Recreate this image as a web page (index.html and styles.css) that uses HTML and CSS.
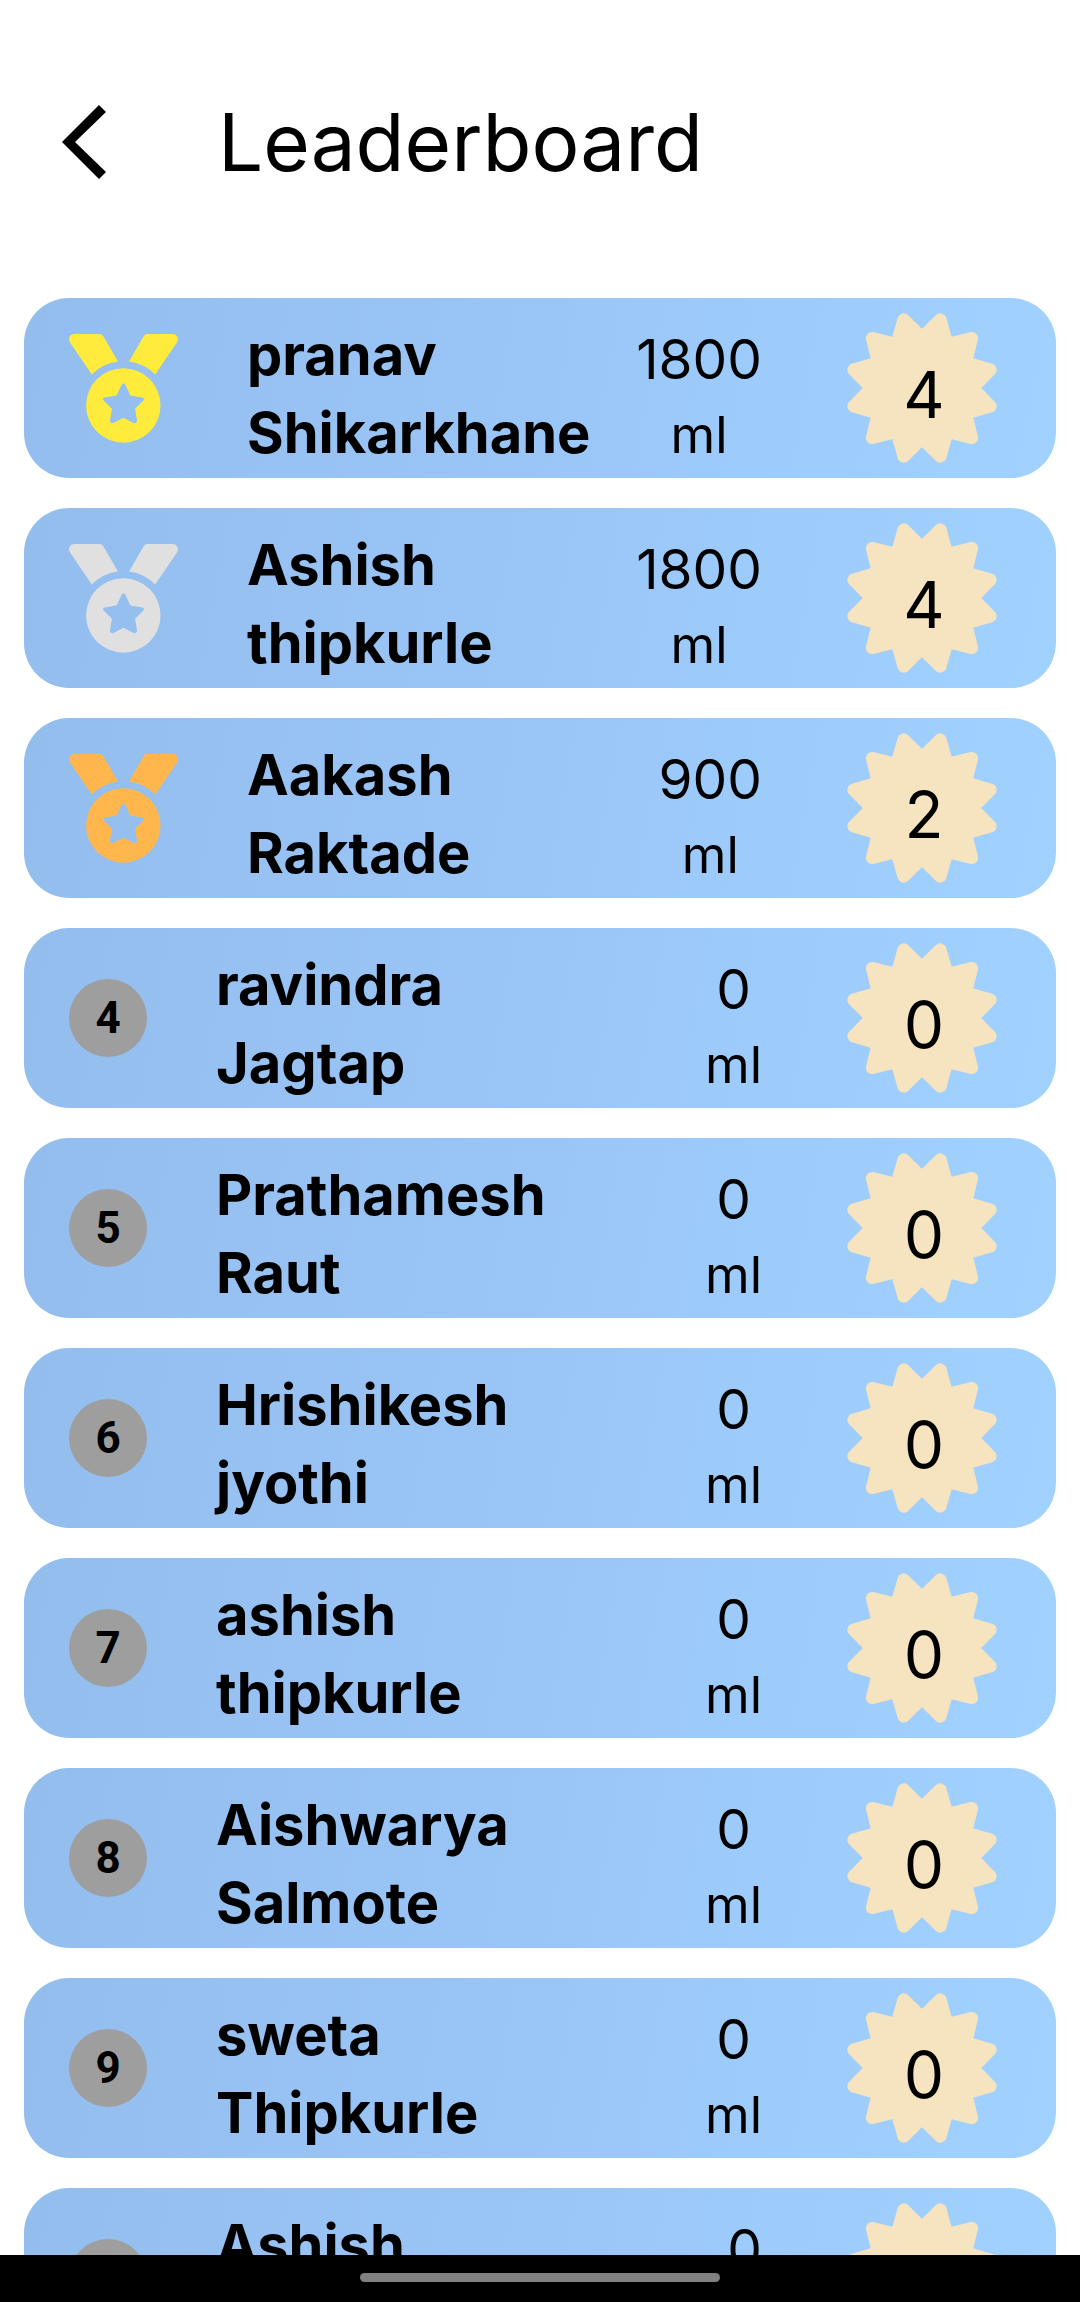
FILE: index.html
```html
<!DOCTYPE html>
<html lang="en">
<head>
<meta charset="utf-8">
<meta name="viewport" content="width=device-width, initial-scale=1">
<title>Leaderboard</title>
<link rel="stylesheet" href="styles.css">
</head>
<body>
<svg class="defs" aria-hidden="true">
  <symbol id="medal" viewBox="57 46 325 325">
    <path d="M72 46H148Q155 46 159 52L203 128A132 132 0 0 0 125 167L60 71Q55 62 59 54Q63 46 72 46Z"/>
    <path d="M367 46H291Q284 46 280 52L236 128A132 132 0 0 1 314 167L379 71Q384 62 380 54Q376 46 367 46Z"/>
    <path fill-rule="evenodd" d="M219 148A111 111 0 1 1 219 370A111 111 0 1 1 219 148ZM214 197L199 229L163 235Q156 238 160 244L185 269L179 305Q180 314 188 312L219 296L251 312Q259 314 260 305L254 269L279 244Q283 238 276 235L240 229L225 197Q219 190 214 197Z"/>
  </symbol>
  <symbol id="burst" viewBox="-225 -225 450 450">
    <path d="M0-178L42-219A19 19 0 0 1 73-210L89-154L146-168A19 19 0 0 1 168-146L154-89L210-73A19 19 0 0 1 219-42L178 0L219 42A19 19 0 0 1 210 73L154 89L168 146A19 19 0 0 1 146 168L89 154L73 210A19 19 0 0 1 42 219L0 178L-42 219A19 19 0 0 1-73 210L-89 154L-146 168A19 19 0 0 1-168 146L-154 89L-210 73A19 19 0 0 1-219 42L-178 0L-219-42A19 19 0 0 1-210-73L-154-89L-168-146A19 19 0 0 1-146-168L-89-154L-73-210A19 19 0 0 1-42-219Z"/>
  </symbol>
</svg>
<header class="app-bar">
  <button class="back" type="button" aria-label="Back">
    <svg viewBox="0 0 44 74"><path d="M37 0L44 7L13 37L44 67L37 74L0 37Z"/></svg>
  </button>
  <h1 class="title">Leaderboard</h1>
</header>
<main class="content">
  <ol class="list">
    <li class="card"><svg class="medal gold" role="img" aria-label="1"><use href="#medal"/></svg><p class="name">pranav<br>Shikarkhane</p><p class="amount">1800<span class="unit">ml</span></p><div class="badge"><svg class="burst"><use href="#burst"/></svg><span class="score">4</span></div></li>
    <li class="card"><svg class="medal silver" role="img" aria-label="2"><use href="#medal"/></svg><p class="name">Ashish<br>thipkurle</p><p class="amount">1800<span class="unit">ml</span></p><div class="badge"><svg class="burst"><use href="#burst"/></svg><span class="score">4</span></div></li>
    <li class="card"><svg class="medal bronze" role="img" aria-label="3"><use href="#medal"/></svg><p class="name">Aakash<br>Raktade</p><p class="amount">900<span class="unit">ml</span></p><div class="badge"><svg class="burst"><use href="#burst"/></svg><span class="score">2</span></div></li>
    <li class="card"><span class="rank">4</span><p class="name">ravindra<br>Jagtap</p><p class="amount">0<span class="unit">ml</span></p><div class="badge"><svg class="burst"><use href="#burst"/></svg><span class="score">0</span></div></li>
    <li class="card"><span class="rank">5</span><p class="name">Prathamesh<br>Raut</p><p class="amount">0<span class="unit">ml</span></p><div class="badge"><svg class="burst"><use href="#burst"/></svg><span class="score">0</span></div></li>
    <li class="card"><span class="rank">6</span><p class="name">Hrishikesh<br>jyothi</p><p class="amount">0<span class="unit">ml</span></p><div class="badge"><svg class="burst"><use href="#burst"/></svg><span class="score">0</span></div></li>
    <li class="card"><span class="rank">7</span><p class="name">ashish<br>thipkurle</p><p class="amount">0<span class="unit">ml</span></p><div class="badge"><svg class="burst"><use href="#burst"/></svg><span class="score">0</span></div></li>
    <li class="card"><span class="rank">8</span><p class="name">Aishwarya<br>Salmote</p><p class="amount">0<span class="unit">ml</span></p><div class="badge"><svg class="burst"><use href="#burst"/></svg><span class="score">0</span></div></li>
    <li class="card"><span class="rank">9</span><p class="name">sweta<br>Thipkurle</p><p class="amount">0<span class="unit">ml</span></p><div class="badge"><svg class="burst"><use href="#burst"/></svg><span class="score">0</span></div></li>
    <li class="card"><span class="rank"></span><p class="name">Ashish</p><p class="amount">0</p><div class="badge"><svg class="burst"><use href="#burst"/></svg></div></li>
  </ol>
</main>
<footer class="nav-bar"><span class="handle"></span></footer>
</body>
</html>
```
FILE: styles.css
```css
* { box-sizing: border-box; }

body {
  margin: 0;
  height: 100vh;
  display: flex;
  flex-direction: column;
  background: #fff;
  color: #000;
  font-family: Inter, Roboto, sans-serif;
}

.defs { position: absolute; width: 0; height: 0; }

.app-bar {
  flex: none;
  display: flex;
  align-items: center;
  height: 283px;
  padding: 0 62px;
  gap: 112px;
}

.back {
  padding: 0;
  border: 0;
  background: none;
  line-height: 0;
}
.back svg { width: 44px; height: 74px; }

.title {
  margin: 0;
  font-size: 80px;
  font-weight: 400;
}

.content {
  flex: 1;
  min-height: 0;
  overflow-y: auto;
  scrollbar-width: none;
}

.list {
  margin: 0;
  padding: 15px 24px;
  display: flex;
  flex-direction: column;
  gap: 30px;
  list-style: none;
}

.card {
  flex: none;
  display: flex;
  align-items: center;
  height: 180px;
  padding: 0 59px 0 45px;
  border-radius: 45px;
  background: linear-gradient(100deg, #93bded, #9ac6f7 50%, #a1d2ff);
}

.medal { flex: none; width: 109px; height: 109px; }
.gold { fill: #ffeb3b; }
.silver { fill: #e0e0e0; }
.bronze { fill: #ffb74d; }

.rank {
  flex: none;
  display: grid;
  place-items: center;
  width: 78px;
  height: 78px;
  border-radius: 50%;
  background: #9e9e9e;
  font: 700 44px Roboto, sans-serif;
}

.name {
  flex: 1;
  align-self: flex-start;
  margin: 0;
  padding: 18px 0 0 69px;
  font-size: 56px;
  font-weight: 700;
  line-height: 78px;
}

.amount {
  align-self: flex-start;
  margin: 0 85px 0 0;
  padding-top: 24px;
  font-size: 55px;
  line-height: 75px;
  text-align: center;
}

.unit { display: block; font-size: 51px; }

.badge { flex: none; display: grid; place-items: center; }
.burst { grid-area: 1 / 1; width: 150px; height: 150px; fill: #f6e3bf; }
.score { grid-area: 1 / 1; padding: 14px 0 0 4px; font-size: 64px; line-height: 78px; }

.nav-bar {
  flex: none;
  display: flex;
  justify-content: center;
  height: 47px;
  padding-top: 18px;
  background: #000;
}
.handle { width: 33.33%; height: 9px; border-radius: 5px; background: #808080; }
```
